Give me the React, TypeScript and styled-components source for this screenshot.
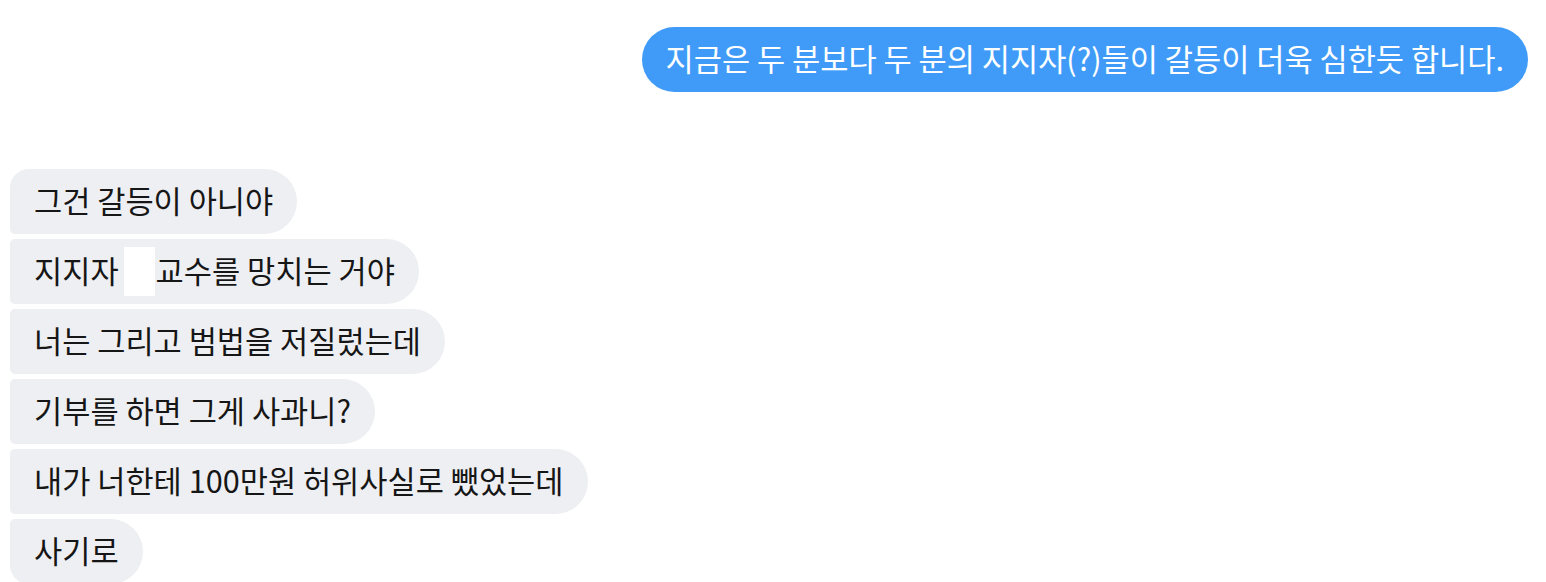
import React from 'react';
import styled, { createGlobalStyle } from 'styled-components';

const GlobalStyle = createGlobalStyle`
  html, body {
    margin: 0;
    padding: 0;
    background: #ffffff;
    overflow: hidden;
  }
  body {
    font-family: 'Noto Sans CJK KR', 'Noto Sans', sans-serif;
  }
`;

type Position = 'first' | 'middle' | 'last';

const Thread = styled.div`
  display: flex;
  flex-direction: column;
  width: 1546px;
  height: 582px;
  box-sizing: border-box;
  padding: 27px 18px 0 10px;
`;

const OutgoingRow = styled.div`
  display: flex;
  justify-content: flex-end;
`;

const IncomingGroup = styled.div`
  display: flex;
  flex-direction: column;
  align-items: flex-start;
  gap: 5px;
  margin-top: 77px;
`;

const Bubble = styled.div`
  display: flex;
  align-items: center;
  box-sizing: border-box;
  height: 65px;
  padding: 0 24px 2px;
  font-size: 30.65px;
  line-height: 1;
  white-space: nowrap;
`;

const OutgoingBubble = styled(Bubble)`
  background: #409bf8;
  color: #ffffff;
  border-radius: 33px;
`;

const IncomingBubble = styled(Bubble)<{ $pos: Position }>`
  background: #eeeff2;
  color: #161616;
  border-radius: ${({ $pos }) =>
    $pos === 'first' ? '19px 33px 33px 5px' : $pos === 'last' ? '5px 33px 33px 19px' : '5px 33px 33px 5px'};
`;

const Redacted = styled.span`
  display: inline-block;
  flex: none;
  width: 31px;
  height: 49px;
  background: #ffffff;
  margin: 2px 1px 0 5px;
`;

export default function App() {
  return (
    <>
      <GlobalStyle />
      <Thread>
        <OutgoingRow>
          <OutgoingBubble>지금은 두 분보다 두 분의 지지자(?)들이 갈등이 더욱 심한듯 합니다.</OutgoingBubble>
        </OutgoingRow>
        <IncomingGroup>
          <IncomingBubble $pos="first">그건 갈등이 아니야</IncomingBubble>
          <IncomingBubble $pos="middle">
            지지자
            <Redacted />
            교수를 망치는 거야
          </IncomingBubble>
          <IncomingBubble $pos="middle">너는 그리고 범법을 저질렀는데</IncomingBubble>
          <IncomingBubble $pos="middle">기부를 하면 그게 사과니?</IncomingBubble>
          <IncomingBubble $pos="middle">내가 너한테 100만원 허위사실로 뺐었는데</IncomingBubble>
          <IncomingBubble $pos="last">사기로</IncomingBubble>
        </IncomingGroup>
      </Thread>
    </>
  );
}
